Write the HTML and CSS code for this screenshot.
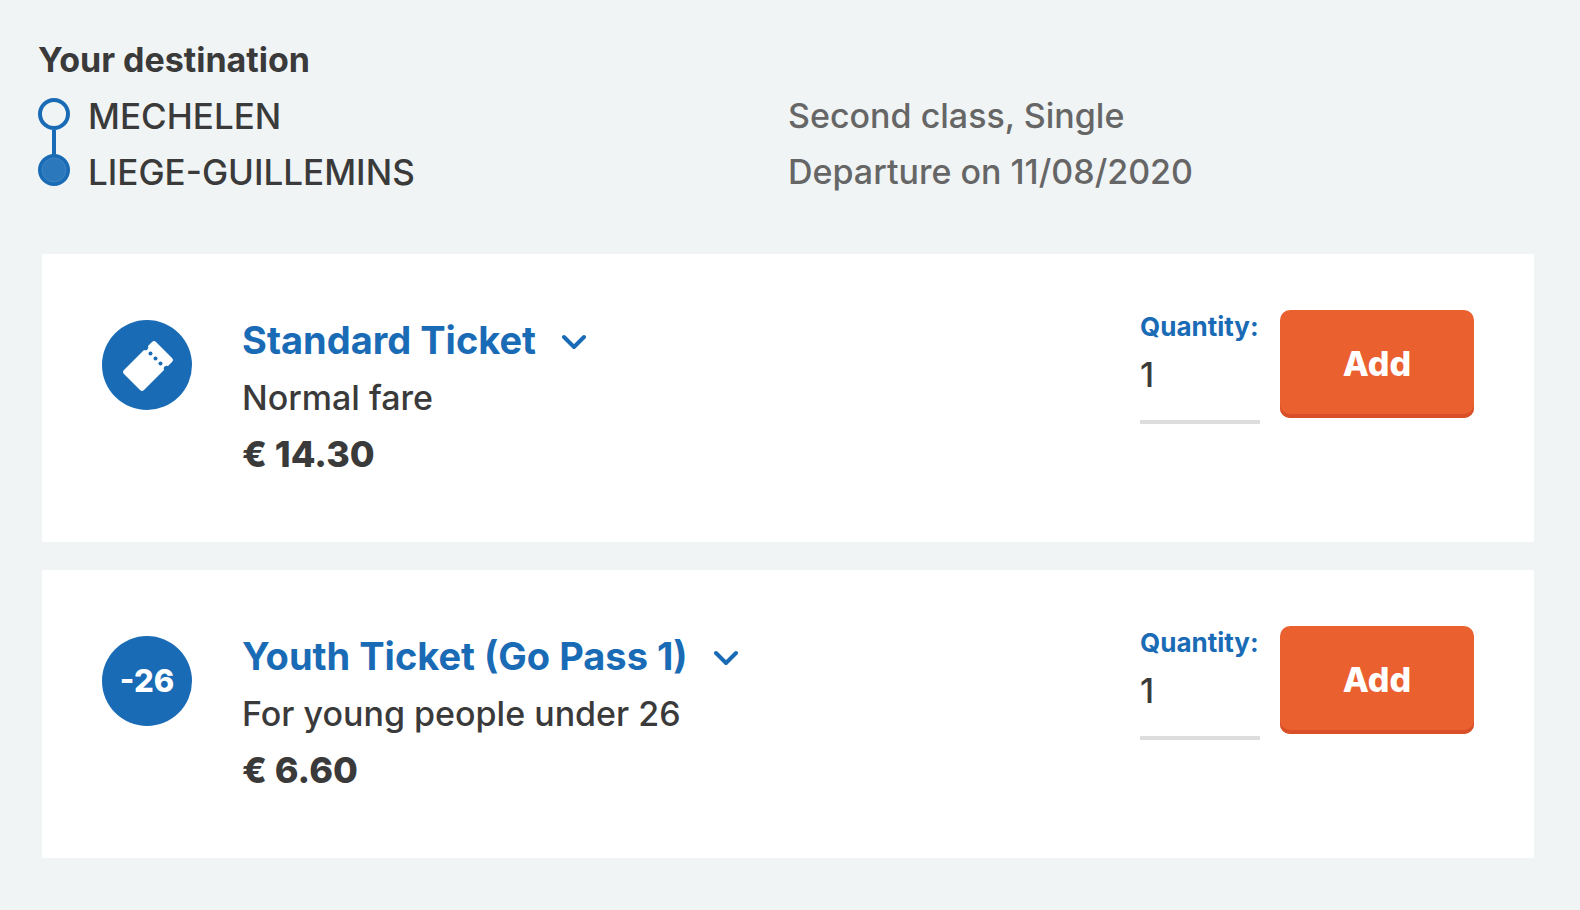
FILE: index.html
```html
<!DOCTYPE html>
<html lang="en">
<head>
    <meta charset="UTF-8">
    <meta name="viewport" content="width=device-width, initial-scale=1.0">
    <title>Your destination</title>
    <link rel="stylesheet" href="styles.css">
</head>
<body>
    <main class="page">
        <section class="trip">
            <div class="trip-route">
                <h1 class="trip-title">Your destination</h1>
                <div class="route">
                    <svg class="route-line" width="32" height="112" viewBox="0 0 32 112">
                        <path d="M16 42v28" stroke="#1a6bb5" stroke-width="4"/>
                        <circle cx="16" cy="26" r="14" fill="none" stroke="#1a6bb5" stroke-width="4"/>
                        <circle cx="16" cy="82" r="14" fill="#2b78bc" stroke="#1a6bb5" stroke-width="4"/>
                        <circle cx="16" cy="82" r="12" fill="none" stroke="#5090c8" stroke-width="1" opacity=".6"/>
                    </svg>
                    <ul class="stations">
                        <li>MECHELEN</li>
                        <li>LIEGE-GUILLEMINS</li>
                    </ul>
                </div>
            </div>
            <div class="trip-details">
                <p>Second class, Single</p>
                <p>Departure on 11/08/2020</p>
            </div>
        </section>

        <section class="tickets">
            <article class="ticket">
                <div class="ticket-icon">
                    <svg width="90" height="90" viewBox="0 0 90 90">
                        <path d="M50 22Q52 20 54 22L70 38Q72 40 70 42L66 46A3 3 0 0 0 62 50L42 70Q40 72 38 70L22 54Q20 52 22 50L42 30A3 3 0 0 0 46 26Z" fill="#fff"/>
                        <circle cx="48.500" cy="33.500" r="2" fill="#1a6bb5"/>
                        <circle cx="53.500" cy="38.500" r="2" fill="#1a6bb5"/>
                        <circle cx="58.500" cy="43.500" r="2" fill="#1a6bb5"/>
                    </svg>
                </div>
                <div class="ticket-info">
                    <h2>
                        <button type="button" class="ticket-toggle">
                            Standard Ticket
                            <svg width="24" height="20" viewBox="0 0 24 20"><path d="M2 7l10 10L22 7"/></svg>
                        </button>
                    </h2>
                    <p>Normal fare</p>
                    <p class="price">€ 14.30</p>
                </div>
                <form class="ticket-form">
                    <div class="quantity">
                        <label for="qty-standard">Quantity:</label>
                        <input type="number" id="qty-standard" value="1" min="1">
                    </div>
                    <button type="button" class="add-btn">Add</button>
                </form>
            </article>

            <article class="ticket">
                <div class="ticket-icon">-26</div>
                <div class="ticket-info">
                    <h2>
                        <button type="button" class="ticket-toggle">
                            Youth Ticket (Go Pass 1)
                            <svg width="24" height="20" viewBox="0 0 24 20"><path d="M2 7l10 10L22 7"/></svg>
                        </button>
                    </h2>
                    <p>For young people under 26</p>
                    <p class="price">€ 6.60</p>
                </div>
                <form class="ticket-form">
                    <div class="quantity">
                        <label for="qty-youth">Quantity:</label>
                        <input type="number" id="qty-youth" value="1" min="1">
                    </div>
                    <button type="button" class="add-btn">Add</button>
                </form>
            </article>
        </section>
    </main>
</body>
</html>
```
FILE: styles.css
```css
* {
    box-sizing: border-box;
}

body {
    margin: 0;
    background-color: #f0f4f5;
    color: #3a3a3a;
    font-family: Inter, "Liberation Sans", sans-serif;
    font-size: 34px;
    font-weight: 450;
    line-height: 56px;
}

h1, h2, p, ul {
    margin: 0;
    padding: 0;
}

button, input {
    font-family: inherit;
    font-weight: inherit;
    color: inherit;
    border: none;
    padding: 0;
}

.page {
    padding: 32px 42px 52px 38px;
}

/* trip summary above the tickets */
.trip {
    display: grid;
    grid-template-columns: 1fr 1fr;
    align-items: end;
}

.trip-title {
    font-size: 34px;
    line-height: 56px;
}

.route {
    display: flex;
    gap: 18px;
}

.route-line {
    flex-shrink: 0;
}

.stations {
    list-style: none;
    font-size: 35px;
}

.trip-details {
    color: #666;
}

/* ticket cards */
.tickets {
    display: flex;
    flex-direction: column;
    gap: 28px;
    padding: 0 4px;
    margin-top: 54px;
}

.ticket {
    display: flex;
    align-items: flex-start;
    background-color: #fff;
    padding: 56px 60px;
}

.ticket-icon {
    display: flex;
    align-items: center;
    justify-content: center;
    flex-shrink: 0;
    width: 90px;
    height: 90px;
    margin: 10px 50px 0 0;
    border-radius: 50%;
    background-color: #1a6bb5;
    color: #fff;
    font-size: 31px;
    font-weight: 800;
}

.ticket-info {
    flex-grow: 1;
    padding: 2px 0 4px;
}

.ticket-info h2 {
    margin-bottom: 2px;
    font-size: 38px;
    line-height: 56px;
}

.ticket-toggle {
    display: flex;
    align-items: center;
    gap: 26px;
    background: none;
    color: #1a6bb5;
    font-size: 38px;
    font-weight: 700;
    line-height: 56px;
    cursor: pointer;
}

.ticket-toggle svg {
    fill: none;
    stroke: #1a6bb5;
    stroke-width: 4;
    stroke-linecap: round;
    stroke-linejoin: round;
}

.price {
    font-size: 36px;
    font-weight: 800;
}

.ticket-form {
    display: flex;
    gap: 20px;
}

.quantity {
    display: flex;
    flex-direction: column;
    width: 120px;
}

.quantity label {
    padding-top: 1px;
    color: #1a6bb5;
    font-size: 26px;
    font-weight: 700;
    line-height: 32px;
    white-space: nowrap;
}

.quantity input {
    width: 100%;
    height: 81px;
    padding-bottom: 14px;
    border-bottom: 4px solid #ddd;
    background: none;
    font-size: 34px;
    appearance: textfield;
}

.quantity input::-webkit-inner-spin-button {
    appearance: none;
    margin: 0;
}

.add-btn {
    width: 194px;
    height: 108px;
    padding-bottom: 2px;
    border-radius: 10px;
    background-color: #eb602f;
    box-shadow: inset 0 -4px #d84f28;
    color: #fff;
    font-size: 34px;
    font-weight: 800;
    cursor: pointer;
}
```
